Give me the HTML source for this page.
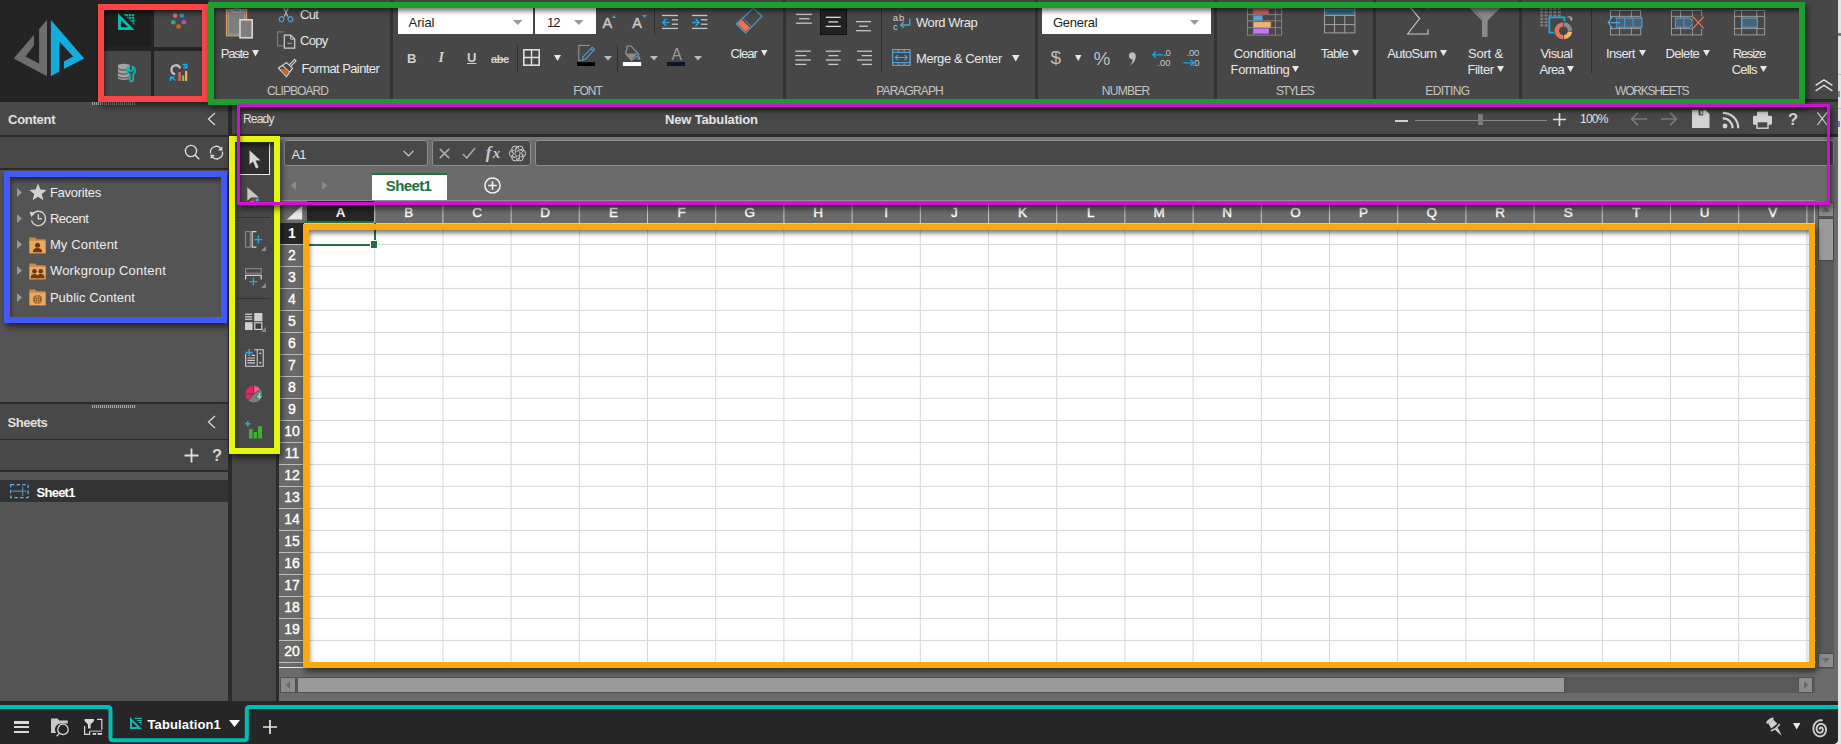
<!DOCTYPE html>
<html lang="en"><head><meta charset="utf-8"><title>New Tabulation</title>
<style>
html,body{margin:0;padding:0;}
body{width:1841px;height:744px;overflow:hidden;background:#e4e4e4;font-family:"Liberation Sans",sans-serif;}
#app{position:absolute;left:0;top:0;width:1838px;height:744px;background:#2b2b2b;overflow:hidden;border-bottom-right-radius:5px;}
.a{position:absolute;box-sizing:border-box;}
.t{white-space:nowrap;}
svg{overflow:visible;}
</style></head><body>
<div id="app">
<div class="a" style="left:0px;top:0px;width:209px;height:102px;background:#242424;"></div>
<div class="a" style="left:209px;top:0px;width:1629px;height:99px;background:#474747;"></div>
<div class="a" style="left:390px;top:0px;width:3px;height:99px;background:#333;"></div>
<div class="a" style="left:783px;top:0px;width:3px;height:99px;background:#333;"></div>
<div class="a" style="left:1034.5px;top:0px;width:3px;height:99px;background:#333;"></div>
<div class="a" style="left:1214px;top:0px;width:3px;height:99px;background:#333;"></div>
<div class="a" style="left:1373px;top:0px;width:3px;height:99px;background:#333;"></div>
<div class="a" style="left:1519px;top:0px;width:3px;height:99px;background:#333;"></div>
<div class="a" style="left:0px;top:102px;width:228px;height:33px;background:#484848;"></div>
<div class="a" style="left:0px;top:136.5px;width:228px;height:31.7px;background:#484848;"></div>
<div class="a" style="left:0px;top:169.6px;width:228px;height:232px;background:#545454;"></div>
<div class="a" style="left:0px;top:404.4px;width:228px;height:34.4px;background:#484848;"></div>
<div class="a" style="left:0px;top:440.4px;width:228px;height:29.8px;background:#484848;"></div>
<div class="a" style="left:0px;top:472px;width:228px;height:230px;background:#545454;"></div>
<div class="a" style="left:0px;top:480px;width:228px;height:22px;background:#333;"></div>
<div class="a" style="left:232px;top:102px;width:1606px;height:32px;background:#484848;"></div>
<div class="a" style="left:232px;top:137px;width:44px;height:565px;background:#484848;"></div>
<div class="a" style="left:279px;top:137px;width:1559px;height:564px;background:#6b6b6b;"></div>
<div class="a" style="left:0px;top:702px;width:1838px;height:42px;background:#262626;"></div>
<div class="a t" style="left:267.02px;top:83.14px;height:16px;line-height:16px;font-size:12px;color:#c4c4c4;letter-spacing:-0.924px;">CLIPBOARD</div>
<div class="a t" style="left:573.24px;top:83.14px;height:16px;line-height:16px;font-size:12px;color:#c4c4c4;letter-spacing:-1.045px;">FONT</div>
<div class="a t" style="left:876.28px;top:83.14px;height:16px;line-height:16px;font-size:12px;color:#c4c4c4;letter-spacing:-0.878px;">PARAGRAPH</div>
<div class="a t" style="left:1101.82px;top:83.14px;height:16px;line-height:16px;font-size:12px;color:#c4c4c4;letter-spacing:-0.728px;">NUMBER</div>
<div class="a t" style="left:1276.04px;top:83.14px;height:16px;line-height:16px;font-size:12px;color:#c4c4c4;letter-spacing:-1.458px;">STYLES</div>
<div class="a t" style="left:1425.29px;top:83.14px;height:16px;line-height:16px;font-size:12px;color:#c4c4c4;letter-spacing:-0.641px;">EDITING</div>
<div class="a t" style="left:1615.00px;top:83.14px;height:16px;line-height:16px;font-size:12px;color:#c4c4c4;letter-spacing:-1.194px;">WORKSHEETS</div>
<div class="a t" style="left:220.70px;top:45.15px;height:17px;line-height:17px;font-size:13px;color:#e8e8e8;letter-spacing:-1.165px;">Paste</div>
<div class="a t" style="left:300.00px;top:5.65px;height:17px;line-height:17px;font-size:13px;color:#e8e8e8;letter-spacing:-0.692px;">Cut</div>
<div class="a t" style="left:300.00px;top:32.15px;height:17px;line-height:17px;font-size:13px;color:#e8e8e8;letter-spacing:-0.671px;">Copy</div>
<div class="a t" style="left:301.50px;top:60.15px;height:17px;line-height:17px;font-size:13px;color:#e8e8e8;letter-spacing:-0.590px;">Format Painter</div>
<svg class="a" style="left:251.8px;top:49.5px;" width="7" height="6.5" viewBox="0 0 7 6.5"><polygon points="0,0 7,0 3.5,6.5" fill="#e8e8e8"/></svg>
<div class="a" style="left:397.5px;top:8.3px;width:135.5px;height:26px;background:#fff;"></div>
<div class="a" style="left:535px;top:8.3px;width:60.5px;height:26px;background:#fff;"></div>
<div class="a t" style="left:408.50px;top:13.65px;height:17px;line-height:17px;font-size:13px;color:#222;">Arial</div>
<div class="a t" style="left:547.00px;top:13.65px;height:17px;line-height:17px;font-size:13px;color:#222;letter-spacing:-0.972px;">12</div>
<svg class="a" style="left:512.5px;top:20px;" width="9.5" height="5" viewBox="0 0 9.5 5"><polygon points="0,0 9.5,0 4.75,5" fill="#999"/></svg>
<svg class="a" style="left:573.5px;top:20px;" width="9.5" height="5" viewBox="0 0 9.5 5"><polygon points="0,0 9.5,0 4.75,5" fill="#999"/></svg>
<div class="a t" style="left:602.60px;top:13.57px;height:19px;line-height:19px;font-size:14.5px;color:#c8c8c8;-webkit-text-stroke:0.4px #c8c8c8;">A</div>
<div class="a t" style="left:632.30px;top:13.57px;height:19px;line-height:19px;font-size:14.5px;color:#c8c8c8;-webkit-text-stroke:0.4px #c8c8c8;">A</div>
<svg class="a" style="left:612px;top:14.5px;" width="4" height="3" viewBox="0 0 4 3"><polygon points="0,3 4,3 2,0" fill="#35a8e0"/></svg>
<svg class="a" style="left:642px;top:14.5px;" width="5" height="3" viewBox="0 0 5 3"><polygon points="0,0 5,0 2.5,3" fill="#35a8e0"/></svg>
<div class="a" style="left:654px;top:8.5px;width:1px;height:26px;background:#2e2e2e;"></div>
<div class="a t" style="left:730.50px;top:45.15px;height:17px;line-height:17px;font-size:13px;color:#e8e8e8;letter-spacing:-0.903px;">Clear</div>
<svg class="a" style="left:761px;top:50px;" width="6.5" height="6" viewBox="0 0 6.5 6"><polygon points="0,0 6.5,0 3.25,6" fill="#e8e8e8"/></svg>
<div class="a t" style="left:407.00px;top:49.65px;height:17px;line-height:17px;font-size:13px;color:#d0d0d0;font-weight:700;">B</div>
<div class="a t" style="left:438.50px;top:49.16px;height:18px;line-height:18px;font-size:14px;color:#d0d0d0;font-weight:700;font-family:'Liberation Serif',serif;font-style:italic;">I</div>
<div class="a t" style="left:467.00px;top:49.15px;height:17px;line-height:17px;font-size:13px;color:#d0d0d0;font-weight:700;text-decoration:underline;">U</div>
<div class="a t" style="left:491.00px;top:52.13px;height:14px;line-height:14px;font-size:11px;color:#d0d0d0;font-weight:700;letter-spacing:-0.381px;text-decoration:line-through;">abc</div>
<div class="a" style="left:516.5px;top:44.5px;width:1px;height:27px;background:#2e2e2e;"></div>
<div class="a" style="left:617px;top:44.5px;width:1px;height:27px;background:#2e2e2e;"></div>
<svg class="a" style="left:553.5px;top:55px;" width="7" height="6" viewBox="0 0 7 6"><polygon points="0,0 7,0 3.5,6" fill="#e8e8e8"/></svg>
<svg class="a" style="left:604px;top:55.5px;" width="8" height="4.5" viewBox="0 0 8 4.5"><polygon points="0,0 8,0 4.0,4.5" fill="#bbb"/></svg>
<svg class="a" style="left:650px;top:55.5px;" width="8" height="4.5" viewBox="0 0 8 4.5"><polygon points="0,0 8,0 4.0,4.5" fill="#bbb"/></svg>
<svg class="a" style="left:694px;top:55.5px;" width="8" height="4.5" viewBox="0 0 8 4.5"><polygon points="0,0 8,0 4.0,4.5" fill="#bbb"/></svg>
<div class="a" style="left:820px;top:8.5px;width:27px;height:26.5px;background:#222;border:1px solid #111;"></div>
<div class="a" style="left:881px;top:8.5px;width:1px;height:64px;background:#2e2e2e;"></div>
<div class="a t" style="left:916.00px;top:14.15px;height:17px;line-height:17px;font-size:13px;color:#e8e8e8;letter-spacing:-0.442px;">Word Wrap</div>
<div class="a t" style="left:916.00px;top:50.15px;height:17px;line-height:17px;font-size:13px;color:#e8e8e8;letter-spacing:-0.426px;">Merge &amp; Center</div>
<svg class="a" style="left:1012px;top:55px;" width="7.5" height="6.5" viewBox="0 0 7.5 6.5"><polygon points="0,0 7.5,0 3.75,6.5" fill="#e8e8e8"/></svg>
<div class="a" style="left:1041.5px;top:8.3px;width:169px;height:26px;background:#fff;"></div>
<div class="a t" style="left:1053.00px;top:13.65px;height:17px;line-height:17px;font-size:13px;color:#222;letter-spacing:-0.269px;">General</div>
<svg class="a" style="left:1190px;top:20px;" width="9" height="5" viewBox="0 0 9 5"><polygon points="0,0 9,0 4.5,5" fill="#999"/></svg>
<div class="a t" style="left:1050.60px;top:45.22px;height:25px;line-height:25px;font-size:19px;color:#bcbcbc;">$</div>
<svg class="a" style="left:1074.5px;top:55px;" width="6.5" height="6" viewBox="0 0 6.5 6"><polygon points="0,0 6.5,0 3.25,6" fill="#e8e8e8"/></svg>
<div class="a t" style="left:1093.60px;top:46.02px;height:25px;line-height:25px;font-size:19px;color:#bcbcbc;">%</div>
<svg class="a" style="left:1127.5px;top:51.5px;" width="9" height="14" viewBox="0 0 9 14"><path d="M4.2,0.2 a3.6,3.6 0 0 1 3.6,3.8 c0,4.2 -2.6,7.8 -6.2,9.6 c2,-2 3,-4 3.2,-6.2 a3.6,3.6 0 0 1 -0.6,-7.2 z" fill="#bcbcbc"/></svg>
<div class="a t" style="left:1233.73px;top:45.15px;height:17px;line-height:17px;font-size:13px;color:#e8e8e8;letter-spacing:-0.290px;">Conditional</div>
<div class="a t" style="left:1230.62px;top:61.15px;height:17px;line-height:17px;font-size:13px;color:#e8e8e8;letter-spacing:-0.329px;">Formatting</div>
<svg class="a" style="left:1292px;top:66px;" width="7" height="6" viewBox="0 0 7 6"><polygon points="0,0 7,0 3.5,6" fill="#e8e8e8"/></svg>
<div class="a t" style="left:1320.80px;top:45.15px;height:17px;line-height:17px;font-size:13px;color:#e8e8e8;letter-spacing:-0.795px;">Table</div>
<svg class="a" style="left:1351.5px;top:50px;" width="7" height="6" viewBox="0 0 7 6"><polygon points="0,0 7,0 3.5,6" fill="#e8e8e8"/></svg>
<div class="a t" style="left:1387.30px;top:45.15px;height:17px;line-height:17px;font-size:13px;color:#e8e8e8;letter-spacing:-0.611px;">AutoSum</div>
<svg class="a" style="left:1440px;top:50px;" width="7" height="6" viewBox="0 0 7 6"><polygon points="0,0 7,0 3.5,6" fill="#e8e8e8"/></svg>
<div class="a t" style="left:1468.00px;top:45.15px;height:17px;line-height:17px;font-size:13px;color:#e8e8e8;letter-spacing:-0.204px;">Sort &amp;</div>
<div class="a t" style="left:1467.40px;top:61.15px;height:17px;line-height:17px;font-size:13px;color:#e8e8e8;letter-spacing:-0.434px;">Filter</div>
<svg class="a" style="left:1496.7px;top:66px;" width="7" height="6" viewBox="0 0 7 6"><polygon points="0,0 7,0 3.5,6" fill="#e8e8e8"/></svg>
<div class="a t" style="left:1540.50px;top:45.15px;height:17px;line-height:17px;font-size:13px;color:#e8e8e8;letter-spacing:-0.577px;">Visual</div>
<div class="a t" style="left:1539.50px;top:61.15px;height:17px;line-height:17px;font-size:13px;color:#e8e8e8;letter-spacing:-0.702px;">Area</div>
<svg class="a" style="left:1567px;top:66px;" width="7" height="6" viewBox="0 0 7 6"><polygon points="0,0 7,0 3.5,6" fill="#e8e8e8"/></svg>
<div class="a" style="left:1591px;top:8.5px;width:1px;height:64.5px;background:#2e2e2e;"></div>
<div class="a t" style="left:1606.00px;top:45.15px;height:17px;line-height:17px;font-size:13px;color:#e8e8e8;letter-spacing:-0.638px;">Insert</div>
<svg class="a" style="left:1639px;top:50px;" width="7" height="6" viewBox="0 0 7 6"><polygon points="0,0 7,0 3.5,6" fill="#e8e8e8"/></svg>
<div class="a t" style="left:1665.50px;top:45.15px;height:17px;line-height:17px;font-size:13px;color:#e8e8e8;letter-spacing:-0.650px;">Delete</div>
<svg class="a" style="left:1703px;top:50px;" width="7" height="6" viewBox="0 0 7 6"><polygon points="0,0 7,0 3.5,6" fill="#e8e8e8"/></svg>
<div class="a t" style="left:1732.70px;top:45.15px;height:17px;line-height:17px;font-size:13px;color:#e8e8e8;letter-spacing:-1.225px;">Resize</div>
<div class="a t" style="left:1731.70px;top:61.15px;height:17px;line-height:17px;font-size:13px;color:#e8e8e8;letter-spacing:-0.799px;">Cells</div>
<svg class="a" style="left:1760px;top:66px;" width="7" height="6" viewBox="0 0 7 6"><polygon points="0,0 7,0 3.5,6" fill="#e8e8e8"/></svg>
<svg class="a" style="left:1814.6px;top:78.6px;" width="18" height="13" viewBox="0 0 18 13"><polyline points="0.6,6.4 9,0.9 17.4,6.4" fill="none" stroke="#ddd" stroke-width="1.5"/><polyline points="0.6,11.9 9,6.4 17.4,11.9" fill="none" stroke="#ddd" stroke-width="1.5"/></svg>
<svg class="a" style="left:0px;top:0px;" width="100" height="100" viewBox="0 0 100 100"><polygon points="47,19.9 39.1,29.1 39.1,63.4 25.5,56.5 33.9,45.5 33.9,34.8 13.7,58.5 47,76.2" fill="#6d6e70"/><polygon points="50.9,19.9 84.2,58.5 63.9,69.1 63.9,61.5 73.1,56.5 59.4,41.4 59.4,71.6 50.9,76.2" fill="#14acdc"/></svg>
<div class="a" style="left:104px;top:10px;width:47.2px;height:36.8px;background:#1f1f1f;"></div>
<div class="a" style="left:154px;top:10px;width:48px;height:36.8px;background:#474747;"></div>
<div class="a" style="left:104px;top:50.9px;width:47.2px;height:45.5px;background:#474747;"></div>
<div class="a" style="left:154px;top:50.9px;width:48px;height:45.5px;background:#474747;"></div>
<svg class="a" style="left:117.9px;top:13px;" width="16.5" height="17" viewBox="0 0 16.5 17"><path d="M0,0 L0,17 L16.5,17 Z M2.9,7 L2.9,14.2 L10.1,14.2 Z" fill="#10b9b0" fill-rule="evenodd"/><path d="M5.6,0.9 H16.3 V2.9 H7.6 Z M8.4,3.8 H16.3 V5.8 H10.4 Z M11.2,6.7 H16.3 V8.7 H13.2 Z M14,9.6 H16.3 V11.9 H16.2 Z" fill="#10b9b0"/><path d="M10.4,0.5 V6 M13.4,0.5 V9" stroke="#1f1f1f" stroke-width="0.6"/></svg>
<svg class="a" style="left:170px;top:10px;" width="20" height="20" viewBox="0 0 20 20"><circle cx="5.2" cy="5.5" r="2.3" fill="#d6796c"/><circle cx="11.9" cy="5.5" r="2.3" fill="#4a8ec2"/><circle cx="3.3" cy="12.2" r="2.3" fill="#4b9f90"/><circle cx="13.9" cy="12.2" r="2.3" fill="#9a59c6"/><circle cx="8.6" cy="16.5" r="2.3" fill="#d0661e"/></svg>
<svg class="a" style="left:117px;top:63px;" width="20" height="19" viewBox="0 0 20 19"><g fill="#a2a2a2"><path d="M0.9,2.6 a6,1.9 0 0 1 12,0 v2 a6,1.9 0 0 1 -12,0 z"/><path d="M0.9,5.6 a6,1.9 0 0 0 12,0 v3 a6,1.9 0 0 1 -12,0 z"/><path d="M0.9,9.6 a6,1.9 0 0 0 12,0 v3 a6,1.9 0 0 1 -12,0 z"/><path d="M0.9,13.6 a6,1.9 0 0 0 12,0 v1.4 a6,1.9 0 0 1 -12,0 z"/></g><path d="M11.4,3.6 v3.4 l1.2,1 h1.8 l1.2,-1 v-3.4 a4.6,4.6 0 0 1 0.6,7.8 v5.2 a1.7,1.7 0 0 1 -3.4,0 v-5.2 a4.6,4.6 0 0 1 -1.4,-7.8 z" fill="#474747" stroke="#12b4b4" stroke-width="1.7" stroke-linejoin="round"/></svg>
<svg class="a" style="left:169px;top:63px;" width="20" height="19" viewBox="0 0 20 19"><path d="M6.2,11.2 A4.5,4.5 0 1 1 11.2,5.3" fill="none" stroke="#bdbdbd" stroke-width="2.3"/><rect x="9.3" y="9.1" width="2.6" height="8.9" fill="#e0604c"/><rect x="13.1" y="12.4" width="2.1" height="5.6" fill="#7cc650"/><rect x="16.1" y="7.9" width="2.1" height="10.1" fill="#f0b45e"/><path d="M13.4,1.4 h4.2 M14.4,1.8 l3.2,2.8 M18,1 v3.9 h-4" fill="none" stroke="#14acf0" stroke-width="1.2"/><path d="M1.4,18 v-3.9 h4.4 M1.6,14.3 l5,3.2" fill="none" stroke="#14acf0" stroke-width="1.3"/></svg>
<div class="a" style="left:92px;top:102px;width:44px;height:3px;background:repeating-linear-gradient(90deg,#bbb 0 1px,#555 1px 2px);opacity:.8;"></div>
<div class="a" style="left:92px;top:405px;width:44px;height:3px;background:repeating-linear-gradient(90deg,#bbb 0 1px,#555 1px 2px);opacity:.8;"></div>
<svg class="a" style="left:225px;top:8px;" width="30" height="32" viewBox="0 0 30 32"><rect x="1.5" y="1.8" width="20" height="26" fill="#7a7a7a" stroke="#d8a05a" stroke-width="1.2"/><rect x="3.6" y="4" width="15.8" height="22" fill="#7e7e7e" stroke="#9a9a9a" stroke-width="1"/><path d="M7,3.8 v-2.4 h3.2 l1.3,-1.6 l1.3,1.6 h3.2 v2.4 z" fill="#7a7a7a" stroke="#b0b0b0" stroke-width="0.9"/><rect x="15" y="11.8" width="12.2" height="18" fill="#7e7e7e" stroke="#d8d8d8" stroke-width="1.6"/></svg>
<svg class="a" style="left:278px;top:4.8px;" width="16" height="18" viewBox="0 0 16 18"><path d="M4.6,0.5 L9.8,11.5 M11.4,0.5 L6.2,11.5" stroke="#c8c8c8" stroke-width="1.1" fill="none"/><ellipse cx="3.6" cy="14.2" rx="2.3" ry="2.6" fill="none" stroke="#4fa3d6" stroke-width="1.2" transform="rotate(25 3.6 14.2)"/><ellipse cx="12.4" cy="14.2" rx="2.3" ry="2.6" fill="none" stroke="#4fa3d6" stroke-width="1.2" transform="rotate(-25 12.4 14.2)"/></svg>
<svg class="a" style="left:276px;top:30px;" width="20" height="20" viewBox="0 0 20 20"><path d="M7.5,1.9 h-6 v14 h6" fill="none" stroke="#7c7c7c" stroke-width="1.1"/><path d="M8.3,5.1 h6.4 l4,4 v9 h-10.4 z" fill="#474747" stroke="#cfcfcf" stroke-width="1.2"/><path d="M14.7,5.1 v4 h4" fill="none" stroke="#cfcfcf" stroke-width="1"/><rect x="11.3" y="12.8" width="4.6" height="1.3" fill="#8a8a8a"/></svg>
<svg class="a" style="left:277px;top:58px;" width="20" height="20" viewBox="0 0 20 20"><path d="M12.6,6.6 L17.6,1.4 L19,2.8 L14,8.2" fill="none" stroke="#d0d0d0" stroke-width="1.2"/><path d="M9.6,4.6 L15.6,10.4 L12.6,14.2 L5.2,7.4 Z" fill="#474747" stroke="#d0d0d0" stroke-width="1.2" stroke-linejoin="round"/><path d="M5.2,7.4 L1.4,10 L9.4,18.6 L12.6,14.2" fill="none" stroke="#d0d0d0" stroke-width="1.2" stroke-linejoin="round"/><path d="M3.4,10.6 L12,12.6 L9.4,17.4 L7.6,15 L6.2,15.2 Z" fill="#d2691e"/></svg>
<div class="a t" style="left:8.00px;top:110.95px;height:17px;line-height:17px;font-size:13px;color:#e0e0e0;font-weight:700;letter-spacing:-0.245px;">Content</div>
<svg class="a" style="left:207px;top:112px;" width="10" height="14" viewBox="0 0 10 14"><polyline points="8,1 1.5,7 8,13" fill="none" stroke="#d8d8d8" stroke-width="1.3"/></svg>
<svg class="a" style="left:184px;top:144px;" width="17" height="17" viewBox="0 0 17 17"><circle cx="7" cy="7" r="5.6" fill="none" stroke="#d8d8d8" stroke-width="1.4"/><path d="M11,11 L15.2,15.2" stroke="#d8d8d8" stroke-width="1.6"/></svg>
<svg class="a" style="left:209px;top:144.5px;" width="15" height="15" viewBox="0 0 15 15"><path d="M1.6,8.6 A5.9,5.9 0 0 1 11.8,3.4" fill="none" stroke="#d8d8d8" stroke-width="1.3"/><polygon points="13.4,1.2 13.4,5.8 9,5.2" fill="#d8d8d8"/><path d="M13.4,6.6 A5.9,5.9 0 0 1 3.2,11.8" fill="none" stroke="#d8d8d8" stroke-width="1.3"/><polygon points="1.6,14 1.6,9.4 6,10" fill="#d8d8d8"/></svg>
<svg class="a" style="left:17px;top:188.1px;" width="5" height="9" viewBox="0 0 5 9"><polygon points="0,0 5,4.5 0,9" fill="#9a9a9a"/></svg>
<div class="a t" style="left:49.90px;top:184.25px;height:17px;line-height:17px;font-size:13px;color:#ececec;letter-spacing:-0.265px;">Favorites</div>
<svg class="a" style="left:17px;top:213.9px;" width="5" height="9" viewBox="0 0 5 9"><polygon points="0,0 5,4.5 0,9" fill="#9a9a9a"/></svg>
<div class="a t" style="left:49.90px;top:210.05px;height:17px;line-height:17px;font-size:13px;color:#ececec;letter-spacing:-0.452px;">Recent</div>
<svg class="a" style="left:17px;top:240.3px;" width="5" height="9" viewBox="0 0 5 9"><polygon points="0,0 5,4.5 0,9" fill="#9a9a9a"/></svg>
<div class="a t" style="left:49.90px;top:236.45px;height:17px;line-height:17px;font-size:13px;color:#ececec;letter-spacing:0.151px;">My Content</div>
<svg class="a" style="left:17px;top:266.1px;" width="5" height="9" viewBox="0 0 5 9"><polygon points="0,0 5,4.5 0,9" fill="#9a9a9a"/></svg>
<div class="a t" style="left:49.90px;top:262.25px;height:17px;line-height:17px;font-size:13px;color:#ececec;letter-spacing:0.213px;">Workgroup Content</div>
<svg class="a" style="left:17px;top:292.8px;" width="5" height="9" viewBox="0 0 5 9"><polygon points="0,0 5,4.5 0,9" fill="#9a9a9a"/></svg>
<div class="a t" style="left:49.90px;top:288.95px;height:17px;line-height:17px;font-size:13px;color:#ececec;letter-spacing:0.041px;">Public Content</div>
<svg class="a" style="left:28.5px;top:182.5px;" width="18" height="18" viewBox="0 0 18 18"><polygon points="9,0.6 11.4,6.6 17.6,7 12.8,11 14.4,17.2 9,13.8 3.6,17.2 5.2,11 0.4,7 6.6,6.6" fill="#d2d2d2"/></svg>
<svg class="a" style="left:28.5px;top:209px;" width="18" height="18" viewBox="0 0 18 18"><path d="M3.2,5.6 A7.2,7.2 0 1 1 2.4,11.4" fill="none" stroke="#d2d2d2" stroke-width="1.4"/><polygon points="0.6,2.6 6,4 2.2,8" fill="#d2d2d2"/><path d="M9.3,5.2 v4.6 h3.6" fill="none" stroke="#d2d2d2" stroke-width="1.4"/></svg>
<svg class="a" style="left:29px;top:236.5px;" width="17" height="17" viewBox="0 0 17 17"><path d="M0.3,0.4 h5.8 l1.6,1.8 h8.8 v2.4 h-16.2 z" fill="#c98c44"/><rect x="0.3" y="3.8" width="16.4" height="12.6" fill="#eaa95e"/><circle cx="8.5" cy="8.2" r="2.5" fill="#6b3a12"/><path d="M3.8,15.2 q0,-4.2 4.7,-4.2 q4.7,0 4.7,4.2 z" fill="#6b3a12"/></svg>
<svg class="a" style="left:29px;top:262.5px;" width="17" height="17" viewBox="0 0 17 17"><path d="M0.3,0.4 h5.8 l1.6,1.8 h8.8 v2.4 h-16.2 z" fill="#c98c44"/><rect x="0.3" y="3.8" width="16.4" height="12.6" fill="#eaa95e"/><circle cx="5.4" cy="8.2" r="2.3" fill="#6b3a12"/><path d="M1.6,15.2 q0,-4.2 3.8,-4.2 q3.8,0 3.8,4.2 z" fill="#6b3a12"/><circle cx="11.8" cy="8.2" r="2.3" fill="#6b3a12"/><path d="M8,15.2 q0,-4.2 3.8,-4.2 q3.8,0 3.8,4.2 z" fill="#6b3a12"/></svg>
<svg class="a" style="left:29px;top:289px;" width="17" height="17" viewBox="0 0 17 17"><path d="M0.3,0.4 h5.8 l1.6,1.8 h8.8 v2.4 h-16.2 z" fill="#c98c44"/><rect x="0.3" y="3.8" width="16.4" height="12.6" fill="#eaa95e"/><circle cx="8.5" cy="10.4" r="4.4" fill="#7a4516"/><path d="M4.1,10.4 h8.8 M8.5,6 v8.8 M5,8.2 h7 M5,12.6 h7" stroke="#eaa95e" stroke-width="0.6" fill="none"/><ellipse cx="8.5" cy="10.4" rx="2" ry="4.4" fill="none" stroke="#eaa95e" stroke-width="0.6"/></svg>
<div class="a t" style="left:7.50px;top:413.65px;height:17px;line-height:17px;font-size:13px;color:#e0e0e0;font-weight:700;letter-spacing:-0.478px;">Sheets</div>
<svg class="a" style="left:207px;top:414.8px;" width="10" height="14" viewBox="0 0 10 14"><polyline points="8,1 1.5,7 8,13" fill="none" stroke="#d8d8d8" stroke-width="1.3"/></svg>
<svg class="a" style="left:184px;top:448px;" width="15" height="15" viewBox="0 0 15 15"><path d="M7.5,0.5 v14 M0.5,7.5 h14" stroke="#e0e0e0" stroke-width="1.8"/></svg>
<div class="a t" style="left:212.00px;top:445.39px;height:21px;line-height:21px;font-size:16.5px;color:#d4d4d4;font-weight:700;">?</div>
<div class="a t" style="left:36.60px;top:484.05px;height:17px;line-height:17px;font-size:13px;color:#fff;font-weight:700;letter-spacing:-0.769px;">Sheet1</div>
<svg class="a" style="left:9.6px;top:484px;" width="19" height="14.4" viewBox="0 0 19 14.4"><rect x="0.7" y="0.7" width="17.4" height="13" fill="none" stroke="#5ab0dc" stroke-width="1.3" stroke-dasharray="3.6 2.2"/><path d="M2.4,7.2 h14" stroke="#4a7f9e" stroke-width="1.5"/><path d="M12.6,2.4 v9.6" stroke="#4a7f9e" stroke-width="1.4"/></svg>
<div class="a t" style="left:243.00px;top:111.44px;height:16px;line-height:16px;font-size:12px;color:#e0e0e0;letter-spacing:-0.819px;">Ready</div>
<div class="a t" style="left:664.96px;top:110.95px;height:17px;line-height:17px;font-size:13px;color:#e4e4e4;font-weight:700;letter-spacing:-0.155px;">New Tabulation</div>
<div class="a" style="left:1395px;top:119.5px;width:13px;height:2px;background:#d0d0d0;"></div>
<div class="a" style="left:1415px;top:120px;width:132px;height:1px;background:#8a8a8a;"></div>
<div class="a" style="left:1477.7px;top:114px;width:5.4px;height:11px;background:#7c7c7c;"></div>
<svg class="a" style="left:1553px;top:112.5px;" width="13" height="13" viewBox="0 0 13 13"><path d="M6.5,0 v13 M0,6.5 h13" stroke="#e0e0e0" stroke-width="1.6"/></svg>
<div class="a t" style="left:1580.00px;top:110.64px;height:16px;line-height:16px;font-size:12px;color:#e0e0e0;letter-spacing:-0.769px;">100%</div>
<svg class="a" style="left:1630px;top:110.6px;" width="18" height="16" viewBox="0 0 18 16"><path d="M17,8 H2 M8,1.6 L1.6,8 L8,14.4" fill="none" stroke="#7a7a7a" stroke-width="1.7"/></svg>
<svg class="a" style="left:1660px;top:110.6px;" width="18" height="16" viewBox="0 0 18 16"><path d="M1,8 H16 M10,1.6 L16.4,8 L10,14.4" fill="none" stroke="#7a7a7a" stroke-width="1.7"/></svg>
<svg class="a" style="left:1691.5px;top:110px;" width="18" height="18" viewBox="0 0 18 18"><path d="M0,0 h13.6 l3.9,3.9 v14.1 h-17.5 z" fill="#d2d2d2"/><rect x="6.6" y="0" width="4.6" height="5.4" fill="#484848"/><rect x="8.6" y="0.8" width="1.8" height="3.4" fill="#d2d2d2"/></svg>
<svg class="a" style="left:1722px;top:110.5px;" width="18" height="18" viewBox="0 0 18 18"><circle cx="3" cy="15" r="2.4" fill="#d2d2d2"/><path d="M0.8,7.4 A9.6,9.6 0 0 1 10.6,17.2" fill="none" stroke="#d2d2d2" stroke-width="2.2"/><path d="M0.8,1.8 A15.2,15.2 0 0 1 16.2,17.2" fill="none" stroke="#d2d2d2" stroke-width="2.2"/></svg>
<svg class="a" style="left:1752.5px;top:110.5px;" width="19" height="18" viewBox="0 0 19 18"><rect x="4" y="0.6" width="11" height="5" fill="#d2d2d2"/><rect x="0" y="4.8" width="19" height="9" rx="1.4" fill="#d2d2d2"/><rect x="4" y="10.6" width="11" height="6.6" fill="#484848" stroke="#d2d2d2" stroke-width="1.4"/></svg>
<div class="a t" style="left:1788.00px;top:108.59px;height:21px;line-height:21px;font-size:16.5px;color:#d4d4d4;font-weight:700;">?</div>
<svg class="a" style="left:1817px;top:112.4px;" width="10.4" height="13.4" viewBox="0 0 10.4 13.4"><path d="M0.4,0.4 L10,13 M10,0.4 L0.4,13" stroke="#d0d0d0" stroke-width="1.2"/></svg>
<div class="a" style="left:239.5px;top:142.5px;width:30.5px;height:32px;background:#2e2e2e;border-right:1px solid #e8e8e8;border-bottom:1px solid #e8e8e8;"></div>
<svg class="a" style="left:248.5px;top:150px;" width="13" height="19" viewBox="0 0 13 19"><polygon points="0.5,0.3 0.5,14.6 4,11.6 7,18.4 9.6,17.2 6.6,10.6 11.6,10.6" fill="#d6d6d6"/></svg>
<svg class="a" style="left:246.5px;top:186.5px;" width="14" height="16" viewBox="0 0 14 16"><polygon points="0.3,0.3 0.3,13.8 4.2,10.4 12,10.4" fill="#c6c6c6"/><rect x="5" y="12.4" width="2.4" height="2.4" fill="#e04848"/><rect x="3.4" y="14" width="2.2" height="2" fill="#35c28a"/><rect x="8.6" y="11.6" width="3" height="3" fill="#35a8e0"/></svg>
<div class="a" style="left:237px;top:217px;width:33px;height:1px;background:#333;"></div>
<div class="a" style="left:237px;top:298px;width:33px;height:1px;background:#333;"></div>
<svg class="a" style="left:245px;top:231px;" width="20" height="18" viewBox="0 0 20 18"><rect x="0.6" y="0.6" width="4.6" height="15.6" fill="none" stroke="#8a8a8a" stroke-width="1.1"/><path d="M11.4,0.6 h-4.2 v15.6 h4.2" fill="none" stroke="#d2d2d2" stroke-width="1.2"/><path d="M13.4,4.6 v8 M9.4,8.6 h8" stroke="#16b0f0" stroke-width="1.3"/></svg>
<svg class="a" style="left:261px;top:246px;" width="5" height="5" viewBox="0 0 5 5"><polygon points="5,0 5,5 0,5" fill="#8c8c8c"/></svg>
<svg class="a" style="left:245px;top:267.5px;" width="20" height="19" viewBox="0 0 20 19"><rect x="0.6" y="0.6" width="15.6" height="4.6" fill="none" stroke="#8a8a8a" stroke-width="1.1"/><path d="M0.6,11.6 v-4.2 h15.6 v4.2" fill="none" stroke="#d2d2d2" stroke-width="1.2"/><path d="M8.4,9.6 v8 M4.4,13.6 h8" stroke="#16b0f0" stroke-width="1.3"/></svg>
<svg class="a" style="left:261px;top:283px;" width="5" height="5" viewBox="0 0 5 5"><polygon points="5,0 5,5 0,5" fill="#8c8c8c"/></svg>
<svg class="a" style="left:245px;top:313px;" width="18" height="18" viewBox="0 0 18 18"><path d="M0,1.2 h7.2 M0,3.7 h7.2 M0,6.2 h7.2" stroke="#bdbdbd" stroke-width="1.4"/><rect x="9.2" y="0" width="8.2" height="8.2" fill="#cfcfcf"/><rect x="0" y="9.2" width="7.6" height="7.8" fill="#cfcfcf"/><rect x="9.8" y="9.8" width="7" height="6.6" fill="#3a3a3a" stroke="#cfcfcf" stroke-width="1.2"/></svg>
<svg class="a" style="left:261px;top:327px;" width="5" height="5" viewBox="0 0 5 5"><polygon points="5,0 5,5 0,5" fill="#8c8c8c"/></svg>
<svg class="a" style="left:244.5px;top:349px;" width="19" height="18" viewBox="0 0 19 18"><path d="M0.6,5 v12.2 h17.6 v-16.4 h-9" fill="none" stroke="#cfcfcf" stroke-width="1.1"/><path d="M12.2,0.8 v16.4" stroke="#cfcfcf" stroke-width="1"/><path d="M2.4,9 h7.6 M2.4,11.4 h7.6 M2.4,13.8 h7.6 M6.6,6.4 h3.4" stroke="#cfcfcf" stroke-width="1.2"/><polygon points="13.8,5 16.6,5 15.2,3" fill="#cfcfcf"/><polygon points="13.8,13 16.6,13 15.2,15" fill="#cfcfcf"/><path d="M4.2,0 v7.2 M0.6,3.6 h7.2" stroke="#2ea6de" stroke-width="1.6"/></svg>
<svg class="a" style="left:244.5px;top:385px;" width="19" height="19" viewBox="0 0 19 19"><circle cx="8.6" cy="9" r="8.4" fill="#7e7e7e"/><path d="M8.6,9 L15.6,4.4 A8.4,8.4 0 0 0 8.6,0.6 Z" fill="#ef5f97" stroke="#484848" stroke-width="0.8"/><path d="M8.6,9 V0.6 A8.4,8.4 0 0 0 0.2,9 Z" fill="#e02868" stroke="#484848" stroke-width="0.8"/><path d="M8.6,9 H0.2 A8.4,8.4 0 0 0 3.4,15.6 Z" fill="#e02868" stroke="#484848" stroke-width="0.8"/><polygon points="14.4,7.2 11,13 13.6,13 12.2,18 17.6,10.6 15,10.6 16.8,7.2" fill="#5ef0b8" stroke="#484848" stroke-width="0.5"/></svg>
<svg class="a" style="left:245px;top:421px;" width="18" height="18" viewBox="0 0 18 18"><rect x="4" y="8" width="3.6" height="9.6" fill="#3fb034"/><rect x="8.6" y="11" width="3.4" height="6.6" fill="#3fb034"/><rect x="13" y="5" width="4" height="12.6" fill="#3fb034"/><path d="M2.8,0 v5.6 M0,2.8 h5.6" stroke="#2ea6de" stroke-width="1.6"/></svg>
<div class="a" style="left:279px;top:137px;width:1559px;height:3px;background:#767676;"></div>
<div class="a" style="left:284px;top:140px;width:143.6px;height:26px;background:#484848;border:1px solid #8e8e8e;border-radius:3px;"></div>
<div class="a" style="left:432px;top:140px;width:98.6px;height:26px;background:#484848;border:1px solid #8e8e8e;border-radius:3px;"></div>
<div class="a" style="left:535px;top:140px;width:1299px;height:26px;background:#484848;border:1px solid #8e8e8e;border-radius:3px;"></div>
<div class="a t" style="left:291.50px;top:146.45px;height:17px;line-height:17px;font-size:13px;color:#e0e0e0;letter-spacing:-0.934px;">A1</div>
<svg class="a" style="left:403px;top:150px;" width="11" height="7" viewBox="0 0 11 7"><polyline points="0.6,0.8 5.5,5.8 10.4,0.8" fill="none" stroke="#d0d0d0" stroke-width="1.2"/></svg>
<svg class="a" style="left:439px;top:148px;" width="11" height="11" viewBox="0 0 11 11"><path d="M0.8,0.8 L10.2,10.2 M10.2,0.8 L0.8,10.2" stroke="#a8a8a8" stroke-width="1.7"/></svg>
<svg class="a" style="left:462px;top:147px;" width="14" height="12" viewBox="0 0 14 12"><polyline points="0.8,7 4.8,11 13,1" fill="none" stroke="#a8a8a8" stroke-width="1.6"/></svg>
<div class="a t" style="left:485.80px;top:141.80px;height:22px;line-height:22px;font-size:17px;color:#c8c8c8;font-weight:700;font-family:'Liberation Serif',serif;font-style:italic;">f</div>
<div class="a t" style="left:492.80px;top:142.57px;height:20px;line-height:20px;font-size:15px;color:#c8c8c8;font-weight:700;font-family:'Liberation Serif',serif;font-style:italic;">x</div>
<svg class="a" style="left:509.3px;top:145px;" width="17" height="17" viewBox="0 0 17 17"><circle cx="13.10" cy="8.50" r="3.5" fill="none" stroke="#cfcfcf" stroke-width="1"/><circle cx="10.80" cy="12.48" r="3.5" fill="none" stroke="#cfcfcf" stroke-width="1"/><circle cx="6.20" cy="12.48" r="3.5" fill="none" stroke="#cfcfcf" stroke-width="1"/><circle cx="3.90" cy="8.50" r="3.5" fill="none" stroke="#cfcfcf" stroke-width="1"/><circle cx="6.20" cy="4.52" r="3.5" fill="none" stroke="#cfcfcf" stroke-width="1"/><circle cx="10.80" cy="4.52" r="3.5" fill="none" stroke="#cfcfcf" stroke-width="1"/><circle cx="8.5" cy="8.5" r="4.3" fill="#484848"/><path d="M10.80,8.50 L10.16,14.68" stroke="#cfcfcf" stroke-width="0.9" fill="none"/><path d="M9.65,10.49 L3.97,13.03" stroke="#cfcfcf" stroke-width="0.9" fill="none"/><path d="M7.35,10.49 L2.32,6.84" stroke="#cfcfcf" stroke-width="0.9" fill="none"/><path d="M6.20,8.50 L6.84,2.32" stroke="#cfcfcf" stroke-width="0.9" fill="none"/><path d="M7.35,6.51 L13.03,3.97" stroke="#cfcfcf" stroke-width="0.9" fill="none"/><path d="M9.65,6.51 L14.68,10.16" stroke="#cfcfcf" stroke-width="0.9" fill="none"/></svg>
<svg class="a" style="left:290px;top:181px;" width="6" height="9" viewBox="0 0 6 9"><polygon points="6,0 6,9 0.5,4.5" fill="#8a8a8a"/></svg>
<svg class="a" style="left:322px;top:181px;" width="6" height="9" viewBox="0 0 6 9"><polygon points="0,0 0,9 5.5,4.5" fill="#8a8a8a"/></svg>
<div class="a" style="left:371.5px;top:173.2px;width:75px;height:27.8px;background:#fff;border-top:2.2px solid #217346;"></div>
<div class="a t" style="left:385.75px;top:175.97px;height:20px;line-height:20px;font-size:15px;color:#1e7145;font-weight:700;letter-spacing:-0.616px;">Sheet1</div>
<svg class="a" style="left:484px;top:177px;" width="17" height="17" viewBox="0 0 17 17"><circle cx="8.5" cy="8.5" r="7.6" fill="none" stroke="#f0f0f0" stroke-width="1.5"/><path d="M8.5,4.2 v8.6 M4.2,8.5 h8.6" stroke="#f0f0f0" stroke-width="1.6"/></svg>
<div class="a" style="left:304px;top:222.4px;width:1511px;height:445.6px;background:#fff;"></div>
<div class="a" style="left:280px;top:200px;width:1535px;height:1px;background:#909090;"></div>
<div class="a" style="left:280px;top:201px;width:1535px;height:22px;background:#6b6b6b;"></div>
<div class="a" style="left:280px;top:223px;width:1535px;height:1px;background:#d4d4d4;"></div>
<div class="a" style="left:307px;top:201px;width:67px;height:20px;background:#262626;"></div>
<div class="a" style="left:304px;top:220.6px;width:71.7px;height:2.6px;background:#217346;"></div>
<svg class="a" style="left:280px;top:201px;" width="26" height="21" viewBox="0 0 26 21"><polygon points="22.2,4.4 22.2,18.5 6.8,18.5" fill="#e8e8e8"/></svg>
<svg class="a" style="left:280px;top:201px;" width="1536" height="468" viewBox="0 0 1536 468"><rect x="94.20" y="1" width="1" height="22" fill="#c9c9c9"/><rect x="94.20" y="21.4" width="1" height="446" fill="#d6d6d6"/><rect x="162.40" y="1" width="1" height="22" fill="#c9c9c9"/><rect x="162.40" y="21.4" width="1" height="446" fill="#d6d6d6"/><rect x="230.60" y="1" width="1" height="22" fill="#c9c9c9"/><rect x="230.60" y="21.4" width="1" height="446" fill="#d6d6d6"/><rect x="298.80" y="1" width="1" height="22" fill="#c9c9c9"/><rect x="298.80" y="21.4" width="1" height="446" fill="#d6d6d6"/><rect x="367.00" y="1" width="1" height="22" fill="#c9c9c9"/><rect x="367.00" y="21.4" width="1" height="446" fill="#d6d6d6"/><rect x="435.20" y="1" width="1" height="22" fill="#c9c9c9"/><rect x="435.20" y="21.4" width="1" height="446" fill="#d6d6d6"/><rect x="503.40" y="1" width="1" height="22" fill="#c9c9c9"/><rect x="503.40" y="21.4" width="1" height="446" fill="#d6d6d6"/><rect x="571.60" y="1" width="1" height="22" fill="#c9c9c9"/><rect x="571.60" y="21.4" width="1" height="446" fill="#d6d6d6"/><rect x="639.80" y="1" width="1" height="22" fill="#c9c9c9"/><rect x="639.80" y="21.4" width="1" height="446" fill="#d6d6d6"/><rect x="708.00" y="1" width="1" height="22" fill="#c9c9c9"/><rect x="708.00" y="21.4" width="1" height="446" fill="#d6d6d6"/><rect x="776.20" y="1" width="1" height="22" fill="#c9c9c9"/><rect x="776.20" y="21.4" width="1" height="446" fill="#d6d6d6"/><rect x="844.40" y="1" width="1" height="22" fill="#c9c9c9"/><rect x="844.40" y="21.4" width="1" height="446" fill="#d6d6d6"/><rect x="912.60" y="1" width="1" height="22" fill="#c9c9c9"/><rect x="912.60" y="21.4" width="1" height="446" fill="#d6d6d6"/><rect x="980.80" y="1" width="1" height="22" fill="#c9c9c9"/><rect x="980.80" y="21.4" width="1" height="446" fill="#d6d6d6"/><rect x="1049.00" y="1" width="1" height="22" fill="#c9c9c9"/><rect x="1049.00" y="21.4" width="1" height="446" fill="#d6d6d6"/><rect x="1117.20" y="1" width="1" height="22" fill="#c9c9c9"/><rect x="1117.20" y="21.4" width="1" height="446" fill="#d6d6d6"/><rect x="1185.40" y="1" width="1" height="22" fill="#c9c9c9"/><rect x="1185.40" y="21.4" width="1" height="446" fill="#d6d6d6"/><rect x="1253.60" y="1" width="1" height="22" fill="#c9c9c9"/><rect x="1253.60" y="21.4" width="1" height="446" fill="#d6d6d6"/><rect x="1321.80" y="1" width="1" height="22" fill="#c9c9c9"/><rect x="1321.80" y="21.4" width="1" height="446" fill="#d6d6d6"/><rect x="1390.00" y="1" width="1" height="22" fill="#c9c9c9"/><rect x="1390.00" y="21.4" width="1" height="446" fill="#d6d6d6"/><rect x="1458.20" y="1" width="1" height="22" fill="#c9c9c9"/><rect x="1458.20" y="21.4" width="1" height="446" fill="#d6d6d6"/><rect x="1526.40" y="1" width="1" height="22" fill="#c9c9c9"/><rect x="1526.40" y="21.4" width="1" height="446" fill="#d6d6d6"/><rect x="1534" y="1" width="1" height="22" fill="#c9c9c9"/><rect x="26" y="42.90" width="1510" height="1" fill="#d6d6d6"/><rect x="26" y="64.90" width="1510" height="1" fill="#d6d6d6"/><rect x="26" y="86.90" width="1510" height="1" fill="#d6d6d6"/><rect x="26" y="108.90" width="1510" height="1" fill="#d6d6d6"/><rect x="26" y="130.90" width="1510" height="1" fill="#d6d6d6"/><rect x="26" y="152.90" width="1510" height="1" fill="#d6d6d6"/><rect x="26" y="174.90" width="1510" height="1" fill="#d6d6d6"/><rect x="26" y="196.90" width="1510" height="1" fill="#d6d6d6"/><rect x="26" y="218.90" width="1510" height="1" fill="#d6d6d6"/><rect x="26" y="240.90" width="1510" height="1" fill="#d6d6d6"/><rect x="26" y="262.90" width="1510" height="1" fill="#d6d6d6"/><rect x="26" y="284.90" width="1510" height="1" fill="#d6d6d6"/><rect x="26" y="306.90" width="1510" height="1" fill="#d6d6d6"/><rect x="26" y="328.90" width="1510" height="1" fill="#d6d6d6"/><rect x="26" y="350.90" width="1510" height="1" fill="#d6d6d6"/><rect x="26" y="372.90" width="1510" height="1" fill="#d6d6d6"/><rect x="26" y="394.90" width="1510" height="1" fill="#d6d6d6"/><rect x="26" y="416.90" width="1510" height="1" fill="#d6d6d6"/><rect x="26" y="438.90" width="1510" height="1" fill="#d6d6d6"/><rect x="26" y="460.90" width="1510" height="1" fill="#d6d6d6"/></svg>
<div class="a" style="left:279px;top:223.0px;width:24.4px;height:445px;background:#6a6a6a;"></div>
<div class="a" style="left:279px;top:223.3px;width:25px;height:20.6px;background:#262626;"></div>
<div class="a" style="left:279px;top:243.5px;width:24.4px;height:1.8px;background:#bdbdbd;"></div>
<div class="a" style="left:279px;top:265.5px;width:24.4px;height:1.8px;background:#bdbdbd;"></div>
<div class="a" style="left:279px;top:287.5px;width:24.4px;height:1.8px;background:#bdbdbd;"></div>
<div class="a" style="left:279px;top:309.5px;width:24.4px;height:1.8px;background:#bdbdbd;"></div>
<div class="a" style="left:279px;top:331.5px;width:24.4px;height:1.8px;background:#bdbdbd;"></div>
<div class="a" style="left:279px;top:353.5px;width:24.4px;height:1.8px;background:#bdbdbd;"></div>
<div class="a" style="left:279px;top:375.5px;width:24.4px;height:1.8px;background:#bdbdbd;"></div>
<div class="a" style="left:279px;top:397.5px;width:24.4px;height:1.8px;background:#bdbdbd;"></div>
<div class="a" style="left:279px;top:419.5px;width:24.4px;height:1.8px;background:#bdbdbd;"></div>
<div class="a" style="left:279px;top:441.5px;width:24.4px;height:1.8px;background:#bdbdbd;"></div>
<div class="a" style="left:279px;top:463.5px;width:24.4px;height:1.8px;background:#bdbdbd;"></div>
<div class="a" style="left:279px;top:485.5px;width:24.4px;height:1.8px;background:#bdbdbd;"></div>
<div class="a" style="left:279px;top:507.5px;width:24.4px;height:1.8px;background:#bdbdbd;"></div>
<div class="a" style="left:279px;top:529.5px;width:24.4px;height:1.8px;background:#bdbdbd;"></div>
<div class="a" style="left:279px;top:551.5px;width:24.4px;height:1.8px;background:#bdbdbd;"></div>
<div class="a" style="left:279px;top:573.5px;width:24.4px;height:1.8px;background:#bdbdbd;"></div>
<div class="a" style="left:279px;top:595.5px;width:24.4px;height:1.8px;background:#bdbdbd;"></div>
<div class="a" style="left:279px;top:617.5px;width:24.4px;height:1.8px;background:#bdbdbd;"></div>
<div class="a" style="left:279px;top:639.5px;width:24.4px;height:1.8px;background:#bdbdbd;"></div>
<div class="a" style="left:279px;top:661.5px;width:24.4px;height:1.8px;background:#bdbdbd;"></div>
<div class="a" style="left:279px;top:666.6px;width:25px;height:1.4px;background:#e8e8e8;"></div>
<div class="a t" style="left:335.73px;top:203.66px;height:18px;line-height:18px;font-size:13.5px;color:#fff;font-weight:700;">A</div>
<div class="a t" style="left:404.30px;top:203.66px;height:18px;line-height:18px;font-size:13.5px;color:#fff;-webkit-text-stroke:0.4px #fff;">B</div>
<div class="a t" style="left:472.13px;top:203.66px;height:18px;line-height:18px;font-size:13.5px;color:#fff;-webkit-text-stroke:0.4px #fff;">C</div>
<div class="a t" style="left:540.33px;top:203.66px;height:18px;line-height:18px;font-size:13.5px;color:#fff;-webkit-text-stroke:0.4px #fff;">D</div>
<div class="a t" style="left:608.90px;top:203.66px;height:18px;line-height:18px;font-size:13.5px;color:#fff;-webkit-text-stroke:0.4px #fff;">E</div>
<div class="a t" style="left:677.48px;top:203.66px;height:18px;line-height:18px;font-size:13.5px;color:#fff;-webkit-text-stroke:0.4px #fff;">F</div>
<div class="a t" style="left:744.55px;top:203.66px;height:18px;line-height:18px;font-size:13.5px;color:#fff;-webkit-text-stroke:0.4px #fff;">G</div>
<div class="a t" style="left:813.13px;top:203.66px;height:18px;line-height:18px;font-size:13.5px;color:#fff;-webkit-text-stroke:0.4px #fff;">H</div>
<div class="a t" style="left:884.32px;top:203.66px;height:18px;line-height:18px;font-size:13.5px;color:#fff;-webkit-text-stroke:0.4px #fff;">I</div>
<div class="a t" style="left:951.02px;top:203.66px;height:18px;line-height:18px;font-size:13.5px;color:#fff;-webkit-text-stroke:0.4px #fff;">J</div>
<div class="a t" style="left:1018.10px;top:203.66px;height:18px;line-height:18px;font-size:13.5px;color:#fff;-webkit-text-stroke:0.4px #fff;">K</div>
<div class="a t" style="left:1087.05px;top:203.66px;height:18px;line-height:18px;font-size:13.5px;color:#fff;-webkit-text-stroke:0.4px #fff;">L</div>
<div class="a t" style="left:1153.38px;top:203.66px;height:18px;line-height:18px;font-size:13.5px;color:#fff;-webkit-text-stroke:0.4px #fff;">M</div>
<div class="a t" style="left:1222.33px;top:203.66px;height:18px;line-height:18px;font-size:13.5px;color:#fff;-webkit-text-stroke:0.4px #fff;">N</div>
<div class="a t" style="left:1290.15px;top:203.66px;height:18px;line-height:18px;font-size:13.5px;color:#fff;-webkit-text-stroke:0.4px #fff;">O</div>
<div class="a t" style="left:1359.10px;top:203.66px;height:18px;line-height:18px;font-size:13.5px;color:#fff;-webkit-text-stroke:0.4px #fff;">P</div>
<div class="a t" style="left:1426.55px;top:203.66px;height:18px;line-height:18px;font-size:13.5px;color:#fff;-webkit-text-stroke:0.4px #fff;">Q</div>
<div class="a t" style="left:1495.13px;top:203.66px;height:18px;line-height:18px;font-size:13.5px;color:#fff;-webkit-text-stroke:0.4px #fff;">R</div>
<div class="a t" style="left:1563.70px;top:203.66px;height:18px;line-height:18px;font-size:13.5px;color:#fff;-webkit-text-stroke:0.4px #fff;">S</div>
<div class="a t" style="left:1632.28px;top:203.66px;height:18px;line-height:18px;font-size:13.5px;color:#fff;-webkit-text-stroke:0.4px #fff;">T</div>
<div class="a t" style="left:1699.73px;top:203.66px;height:18px;line-height:18px;font-size:13.5px;color:#fff;-webkit-text-stroke:0.4px #fff;">U</div>
<div class="a t" style="left:1768.30px;top:203.66px;height:18px;line-height:18px;font-size:13.5px;color:#fff;-webkit-text-stroke:0.4px #fff;">V</div>
<div class="a t" style="left:288.11px;top:223.96px;height:18px;line-height:18px;font-size:14px;color:#fff;font-weight:700;">1</div>
<div class="a t" style="left:288.11px;top:245.96px;height:18px;line-height:18px;font-size:14px;color:#fff;-webkit-text-stroke:0.35px #fff;">2</div>
<div class="a t" style="left:288.11px;top:267.96px;height:18px;line-height:18px;font-size:14px;color:#fff;-webkit-text-stroke:0.35px #fff;">3</div>
<div class="a t" style="left:288.11px;top:289.96px;height:18px;line-height:18px;font-size:14px;color:#fff;-webkit-text-stroke:0.35px #fff;">4</div>
<div class="a t" style="left:288.11px;top:311.96px;height:18px;line-height:18px;font-size:14px;color:#fff;-webkit-text-stroke:0.35px #fff;">5</div>
<div class="a t" style="left:288.11px;top:333.96px;height:18px;line-height:18px;font-size:14px;color:#fff;-webkit-text-stroke:0.35px #fff;">6</div>
<div class="a t" style="left:288.11px;top:355.96px;height:18px;line-height:18px;font-size:14px;color:#fff;-webkit-text-stroke:0.35px #fff;">7</div>
<div class="a t" style="left:288.11px;top:377.96px;height:18px;line-height:18px;font-size:14px;color:#fff;-webkit-text-stroke:0.35px #fff;">8</div>
<div class="a t" style="left:288.11px;top:399.96px;height:18px;line-height:18px;font-size:14px;color:#fff;-webkit-text-stroke:0.35px #fff;">9</div>
<div class="a t" style="left:284.21px;top:421.96px;height:18px;line-height:18px;font-size:14px;color:#fff;-webkit-text-stroke:0.35px #fff;">10</div>
<div class="a t" style="left:284.73px;top:443.96px;height:18px;line-height:18px;font-size:14px;color:#fff;-webkit-text-stroke:0.35px #fff;">11</div>
<div class="a t" style="left:284.21px;top:465.96px;height:18px;line-height:18px;font-size:14px;color:#fff;-webkit-text-stroke:0.35px #fff;">12</div>
<div class="a t" style="left:284.21px;top:487.96px;height:18px;line-height:18px;font-size:14px;color:#fff;-webkit-text-stroke:0.35px #fff;">13</div>
<div class="a t" style="left:284.21px;top:509.96px;height:18px;line-height:18px;font-size:14px;color:#fff;-webkit-text-stroke:0.35px #fff;">14</div>
<div class="a t" style="left:284.21px;top:531.96px;height:18px;line-height:18px;font-size:14px;color:#fff;-webkit-text-stroke:0.35px #fff;">15</div>
<div class="a t" style="left:284.21px;top:553.96px;height:18px;line-height:18px;font-size:14px;color:#fff;-webkit-text-stroke:0.35px #fff;">16</div>
<div class="a t" style="left:284.21px;top:575.96px;height:18px;line-height:18px;font-size:14px;color:#fff;-webkit-text-stroke:0.35px #fff;">17</div>
<div class="a t" style="left:284.21px;top:597.96px;height:18px;line-height:18px;font-size:14px;color:#fff;-webkit-text-stroke:0.35px #fff;">18</div>
<div class="a t" style="left:284.21px;top:619.96px;height:18px;line-height:18px;font-size:14px;color:#fff;-webkit-text-stroke:0.35px #fff;">19</div>
<div class="a t" style="left:284.21px;top:641.96px;height:18px;line-height:18px;font-size:14px;color:#fff;-webkit-text-stroke:0.35px #fff;">20</div>
<div class="a" style="left:306px;top:243.6px;width:68px;height:2.2px;background:#217346;"></div>
<div class="a" style="left:373.8px;top:223px;width:2px;height:19px;background:#217346;"></div>
<div class="a" style="left:371px;top:241.4px;width:6.2px;height:6.2px;background:#217346;border:1px solid #fff;box-sizing:content-box;margin:-1px;"></div>
<div class="a" style="left:280px;top:677px;width:1535px;height:16px;background:#595959;"></div>
<div class="a" style="left:280px;top:677px;width:15.5px;height:16px;background:#8c8c8c;border:1px solid #505050;"></div>
<svg class="a" style="left:285px;top:681px;" width="5" height="8" viewBox="0 0 5 8"><polygon points="5,0 5,8 0.5,4" fill="#6a6a6a"/></svg>
<div class="a" style="left:296.5px;top:677px;width:1268.5px;height:16px;background:#9a9a9a;border:1px solid #505050;"></div>
<div class="a" style="left:1798px;top:677px;width:15px;height:16px;background:#8c8c8c;border:1px solid #505050;"></div>
<svg class="a" style="left:1803.5px;top:681px;" width="5" height="8" viewBox="0 0 5 8"><polygon points="0,0 0,8 4.5,4" fill="#6a6a6a"/></svg>
<div class="a" style="left:1818.3px;top:201.5px;width:15.4px;height:467px;background:#595959;"></div>
<div class="a" style="left:1818.3px;top:201.5px;width:15.4px;height:15px;background:#8c8c8c;border:1px solid #505050;"></div>
<svg class="a" style="left:1822px;top:207px;" width="8" height="5" viewBox="0 0 8 5"><polygon points="0,5 8,5 4,0.5" fill="#6a6a6a"/></svg>
<div class="a" style="left:1818.3px;top:217.8px;width:15.4px;height:42.8px;background:#9a9a9a;border:1px solid #484848;"></div>
<div class="a" style="left:1818.3px;top:653px;width:15.4px;height:15px;background:#8c8c8c;border:1px solid #505050;"></div>
<svg class="a" style="left:1822px;top:658px;" width="8" height="5" viewBox="0 0 8 5"><polygon points="0,0 8,0 4,4.5" fill="#6a6a6a"/></svg>
<div class="a" style="left:0px;top:701px;width:1838px;height:43px;background:#262626;"></div>
<svg class="a" style="left:0px;top:700px;" width="1838" height="44" viewBox="0 0 1838 44"><path d="M-2,7 H108 Q110.5,7 110.5,9.5 V37.7 Q110.5,40.2 113,40.2 H244.3 Q246.8,40.2 246.8,37.7 V9.5 Q246.8,7 249.3,7 H1840" fill="none" stroke="#00bdb5" stroke-width="4"/></svg>
<div class="a" style="left:14px;top:721.2px;width:15.2px;height:2.4px;background:#d8d8d8;"></div>
<div class="a" style="left:14px;top:725.9000000000001px;width:15.2px;height:2.4px;background:#d8d8d8;"></div>
<div class="a" style="left:14px;top:730.6px;width:15.2px;height:2.4px;background:#d8d8d8;"></div>
<svg class="a" style="left:50px;top:717px;" width="21" height="20" viewBox="0 0 21 20"><path d="M1,1.4 h6.6 l1.6,2 h8.6 v3 h-7 a6,6 0 0 0 -4.6,9.6 h-5.2 z" fill="#c8c8c8"/><circle cx="13" cy="12.4" r="5.2" fill="none" stroke="#d8d8d8" stroke-width="1.3"/><path d="M9.4,16.4 L6.6,19.2" stroke="#d8d8d8" stroke-width="1.3"/></svg>
<svg class="a" style="left:84px;top:718px;" width="19" height="18" viewBox="0 0 19 18"><path d="M0.6,1 h9.4 v2 l-3.4,3.4 v4 h-2.6 v-4 l-3.4,-3.4 z" fill="#d8d8d8"/><path d="M13,1.4 h4.8 v10.4 M0.6,8 v8.4 h5 v-3.4" fill="none" stroke="#d8d8d8" stroke-width="1.2"/><rect x="5.6" y="12.4" width="12.4" height="1.6" fill="#8c8c8c"/><rect x="8.6" y="15" width="3.6" height="1.8" fill="#d8d8d8"/><rect x="13.6" y="15" width="4.4" height="1.8" fill="#d8d8d8"/></svg>
<svg class="a" style="left:129.8px;top:717.2px;" width="12" height="12" viewBox="0 0 12 12"><path d="M0,0 L0,12 L12,12 Z M2.1,5 L2.1,10 L7.1,10 Z" fill="#10b9b0" fill-rule="evenodd"/><path d="M4,0.8 H11.8 V2 H5.2 Z M6.2,2.9 H11.8 V4.1 H7.4 Z M8.4,5 H11.8 V6.2 H9.6 Z M10.4,7.1 H11.8 V8.4 H11.6 Z" fill="#10b9b0"/></svg>
<div class="a t" style="left:147.50px;top:715.65px;height:17px;line-height:17px;font-size:13px;color:#fff;font-weight:700;letter-spacing:0.126px;">Tabulation1</div>
<svg class="a" style="left:229px;top:720px;" width="11" height="7" viewBox="0 0 11 7"><polygon points="0,0 11,0 5.5,7" fill="#fff"/></svg>
<svg class="a" style="left:263px;top:720px;" width="14" height="14" viewBox="0 0 14 14"><path d="M7,0 v14 M0,7 h14" stroke="#e6e6e6" stroke-width="1.7"/></svg>
<svg class="a" style="left:1765px;top:717px;" width="20" height="20" viewBox="0 0 20 20"><g transform="rotate(-38 10 10)"><ellipse cx="10" cy="1.8" rx="4.4" ry="1.7" fill="#d0d0d0"/><path d="M6.8,3.4 h6.4 l0.6,5.4 h-7.6 z" fill="#d0d0d0"/><path d="M4.4,10.4 q5.6,2.2 11.2,0" fill="none" stroke="#d0d0d0" stroke-width="1.5"/><polygon points="8.2,12.2 11.8,12.2 10,21" fill="#d0d0d0"/></g></svg>
<svg class="a" style="left:1793px;top:722.8px;" width="7.4" height="6.4" viewBox="0 0 7.4 6.4"><polygon points="0,0 7.4,0 3.7,6.4" fill="#e8e8e8"/></svg>
<svg class="a" style="left:1811.5px;top:718.5px;" width="18" height="20" viewBox="0 0 18 20"><polyline points="7.68,9.71 7.68,9.60 7.70,9.49 7.72,9.38 7.76,9.27 7.80,9.17 7.86,9.06 7.93,8.96 8.01,8.86 8.10,8.77 8.20,8.69 8.31,8.62 8.43,8.55 8.56,8.50 8.70,8.47 8.84,8.44 8.98,8.43 9.13,8.44 9.29,8.47 9.44,8.51 9.59,8.56 9.74,8.64 9.89,8.73 10.03,8.84 10.17,8.97 10.29,9.11 10.41,9.27 10.51,9.45 10.61,9.63 10.69,9.83 10.75,10.04 10.80,10.27 10.83,10.49 10.84,10.73 10.83,10.97 10.81,11.21 10.76,11.46 10.69,11.70 10.61,11.94 10.50,12.17 10.37,12.39 10.23,12.60 10.06,12.80 9.88,12.99 9.68,13.16 9.46,13.31 9.23,13.44 8.99,13.55 8.73,13.63 8.47,13.69 8.20,13.73 7.92,13.73 7.64,13.71 7.36,13.66 7.08,13.58 6.81,13.48 6.54,13.34 6.28,13.18 6.03,12.98 5.79,12.76 5.57,12.52 5.36,12.25 5.18,11.96 5.01,11.64 4.87,11.31 4.76,10.96 4.67,10.60 4.61,10.23 4.58,9.84 4.58,9.45 4.61,9.06 4.67,8.67 4.76,8.28 4.88,7.90 5.03,7.53 5.21,7.17 5.43,6.83 5.67,6.50 5.93,6.20 6.23,5.92 6.54,5.67 6.88,5.45 7.24,5.26 7.61,5.11 8.00,4.99 8.40,4.91 8.81,4.87 9.22,4.87 9.63,4.91 10.05,5.00 10.46,5.12 10.86,5.29 11.25,5.49 11.63,5.74 11.99,6.02 12.32,6.35 12.64,6.70 12.93,7.09 13.19,7.51 13.42,7.96 13.61,8.43 13.77,8.93 13.89,9.44 13.98,9.97 14.02,10.50 14.02,11.05 13.98,11.59 13.89,12.14 13.76,12.67 13.59,13.20 13.38,13.71 13.13,14.20 12.84,14.67 12.51,15.12 12.15,15.53 11.75,15.91 11.32,16.25 10.87,16.55 10.39,16.80 9.89,17.01 9.37,17.17 8.83,17.27 8.29,17.33 7.74,17.33 7.19,17.28 6.64,17.18 6.10,17.01 5.57,16.80 5.05,16.53 4.55,16.21 4.08,15.84 3.63,15.43 3.22,14.96 2.84,14.46 2.49,13.91 2.19,13.33 1.93,12.72 1.72,12.09 1.56,11.43 1.45,10.75 1.39,10.06 1.38,9.36 1.43,8.66 1.53,7.97 1.68,7.28 1.89,6.60 2.15,5.95 2.47,5.31 2.83,4.71 3.24,4.15 3.69,3.62 4.19,3.13 4.72,2.70 5.29,2.31 5.89,1.98 6.52,1.71 7.17,1.50 7.83,1.35 8.51,1.27 9.20,1.25 9.89,1.31" fill="none" stroke="#d0d0d0" stroke-width="1.9" stroke-linecap="round"/></svg>
<svg class="a" style="left:662px;top:0px;" width="1" height="1" viewBox="0 0 1 1"><path d="M0.0,15.5 H16.0" stroke="#c6c6c6" stroke-width="1.3"/><path d="M9.8,19.8 H16.0" stroke="#c6c6c6" stroke-width="1.3"/><path d="M9.8,24.2 H16.0" stroke="#c6c6c6" stroke-width="1.3"/><path d="M0.0,28.4 H16.0" stroke="#c6c6c6" stroke-width="1.3"/></svg>
<svg class="a" style="left:662px;top:17.5px;" width="8" height="9" viewBox="0 0 8 9"><path d="M7.4,4.4 H1 M4.2,0.8 L0.8,4.4 L4.2,8" fill="none" stroke="#16a8e8" stroke-width="1.5"/></svg>
<svg class="a" style="left:692px;top:0px;" width="1" height="1" viewBox="0 0 1 1"><path d="M0.0,15.5 H15.4" stroke="#c6c6c6" stroke-width="1.3"/><path d="M9.0,19.8 H15.4" stroke="#c6c6c6" stroke-width="1.3"/><path d="M9.0,24.2 H15.4" stroke="#c6c6c6" stroke-width="1.3"/><path d="M0.0,28.4 H15.4" stroke="#c6c6c6" stroke-width="1.3"/></svg>
<svg class="a" style="left:691.5px;top:17.5px;" width="8" height="9" viewBox="0 0 8 9"><path d="M0.2,4.4 H6.6 M3.6,0.8 L7,4.4 L3.6,8" fill="none" stroke="#16a8e8" stroke-width="1.5"/></svg>
<svg class="a" style="left:735px;top:7px;" width="30" height="28" viewBox="0 0 30 28"><polygon points="18.4,1.4 27,9.2 10.6,25.8 1.3,17" fill="none" stroke="#4a9cc8" stroke-width="1.2"/><polygon points="6.4,12.4 15,20.4 10.6,24.6 2.6,17" fill="#f07050"/><path d="M7.4,11 L16.4,19.6" stroke="#4a9cc8" stroke-width="1"/></svg>
<svg class="a" style="left:523px;top:49px;" width="17" height="17" viewBox="0 0 17 17"><rect x="0.8" y="0.8" width="15.4" height="15.4" fill="none" stroke="#e6e6e6" stroke-width="1.5"/><path d="M8.5,0.8 V16.2 M0.8,8.5 H16.2" stroke="#e6e6e6" stroke-width="1.4"/></svg>
<svg class="a" style="left:577px;top:44px;" width="19" height="23" viewBox="0 0 19 23"><path d="M12.6,1.4 H1.8 V16.4 H4" fill="none" stroke="#9a9a9a" stroke-width="1"/><path d="M5.2,16.4 L6.2,12.6 L15.2,3.2 L17.6,5.4 L8.6,15 Z M13.6,4.8 L16,7" fill="none" stroke="#4a9cd0" stroke-width="1.2" stroke-linejoin="round"/><rect x="0" y="18.2" width="18" height="3.8" fill="#000"/></svg>
<svg class="a" style="left:622px;top:45px;" width="20" height="22" viewBox="0 0 20 22"><path d="M5,3.6 V1 H9 L17,9.6 L9.6,15.4 L3.6,8.6 Z" fill="none" stroke="#9a9a9a" stroke-width="1.1" stroke-linejoin="round"/><path d="M4.4,8.4 H15.6 L9.6,14.8 Z" fill="#8a8a8a"/><path d="M16.8,10.6 l1.7,2.6 l-1.7,2 l-1.7,-2 z" fill="#4a9cd0"/><rect x="0.9" y="17" width="18.3" height="4" fill="#fff"/></svg>
<div class="a t" style="left:671.13px;top:44.00px;height:22px;line-height:22px;font-size:17px;color:#9a9a9a;font-weight:400;transform:scaleX(0.92);">A</div>
<div class="a" style="left:667px;top:62.2px;width:18px;height:3.8px;background:#0a1430;"></div>
<svg class="a" style="left:795px;top:0px;" width="1" height="1" viewBox="0 0 1 1"><path d="M1.0,14.4 H17.0" stroke="#c6c6c6" stroke-width="1.3"/><path d="M4.0,18.7 H14.5" stroke="#c6c6c6" stroke-width="1.3"/><path d="M1.0,23.2 H17.0" stroke="#c6c6c6" stroke-width="1.3"/></svg>
<svg class="a" style="left:825px;top:0px;" width="1" height="1" viewBox="0 0 1 1"><path d="M0.8,17.3 H15.8" stroke="#dcdcdc" stroke-width="1.3"/><path d="M3.4,21.9 H13.2" stroke="#dcdcdc" stroke-width="1.3"/><path d="M0.8,26.4 H15.8" stroke="#dcdcdc" stroke-width="1.3"/></svg>
<svg class="a" style="left:855px;top:0px;" width="1" height="1" viewBox="0 0 1 1"><path d="M1.0,21.6 H16.0" stroke="#c6c6c6" stroke-width="1.3"/><path d="M4.0,26.2 H13.0" stroke="#c6c6c6" stroke-width="1.3"/><path d="M1.0,30.7 H16.0" stroke="#c6c6c6" stroke-width="1.3"/></svg>
<svg class="a" style="left:795px;top:0px;" width="1" height="1" viewBox="0 0 1 1"><path d="M0.2,51.2 H15.8" stroke="#c6c6c6" stroke-width="1.3"/><path d="M0.2,55.6 H11.3" stroke="#c6c6c6" stroke-width="1.3"/><path d="M0.2,60.0 H15.8" stroke="#c6c6c6" stroke-width="1.3"/><path d="M0.2,64.4 H11.3" stroke="#c6c6c6" stroke-width="1.3"/></svg>
<svg class="a" style="left:825px;top:0px;" width="1" height="1" viewBox="0 0 1 1"><path d="M0.8,51.2 H15.8" stroke="#c6c6c6" stroke-width="1.3"/><path d="M3.4,55.6 H13.2" stroke="#c6c6c6" stroke-width="1.3"/><path d="M0.8,60.0 H15.8" stroke="#c6c6c6" stroke-width="1.3"/><path d="M3.4,64.4 H13.2" stroke="#c6c6c6" stroke-width="1.3"/></svg>
<svg class="a" style="left:856px;top:0px;" width="1" height="1" viewBox="0 0 1 1"><path d="M1.0,51.2 H16.0" stroke="#c6c6c6" stroke-width="1.3"/><path d="M5.7,55.6 H16.0" stroke="#c6c6c6" stroke-width="1.3"/><path d="M1.0,60.0 H16.0" stroke="#c6c6c6" stroke-width="1.3"/><path d="M5.7,64.4 H16.0" stroke="#c6c6c6" stroke-width="1.3"/></svg>
<div class="a t" style="left:892.80px;top:12.31px;height:12px;line-height:12px;font-size:9.5px;color:#cfcfcf;letter-spacing:0.956px;">ab</div>
<div class="a t" style="left:893.00px;top:20.91px;height:12px;line-height:12px;font-size:9.5px;color:#cfcfcf;">c</div>
<svg class="a" style="left:899px;top:18px;" width="12" height="10" viewBox="0 0 12 10"><path d="M10.8,0.6 V7 H2 M5,4 L1.6,7 L5,10" fill="none" stroke="#4aa0d8" stroke-width="1.3"/></svg>
<svg class="a" style="left:892px;top:49px;" width="19" height="17" viewBox="0 0 19 17"><rect x="0.6" y="0.6" width="17.4" height="15.8" fill="none" stroke="#9a9a9a" stroke-width="1.1"/><path d="M6.4,0.6 v2.2 M12.2,0.6 v2.2 M6.4,14.2 v2.2 M12.2,14.2 v2.2" stroke="#9a9a9a" stroke-width="1"/><rect x="0.6" y="3.4" width="17.4" height="10.2" fill="#474747" stroke="#4aa0d8" stroke-width="1.2"/><path d="M3.4,8.5 H15.2 M6,6 L3.2,8.5 L6,11 M12.6,6 L15.4,8.5 L12.6,11" fill="none" stroke="#4aa0d8" stroke-width="1.1"/></svg>
<svg class="a" style="left:1152px;top:51px;" width="12" height="8" viewBox="0 0 12 8"><path d="M11.4,3.8 H1 M4,0.8 L0.8,3.8 L4,6.8" fill="none" stroke="#16a8e8" stroke-width="1.3"/></svg>
<div class="a t" style="left:1163.50px;top:47.21px;height:12px;line-height:12px;font-size:9.5px;color:#c6c6c6;letter-spacing:-0.615px;">.0</div>
<div class="a t" style="left:1157.30px;top:56.81px;height:12px;line-height:12px;font-size:9.5px;color:#c6c6c6;">.00</div>
<div class="a t" style="left:1186.60px;top:47.21px;height:12px;line-height:12px;font-size:9.5px;color:#c6c6c6;letter-spacing:-0.202px;">.00</div>
<svg class="a" style="left:1182.5px;top:58.6px;" width="12" height="8" viewBox="0 0 12 8"><path d="M0.4,3.8 H10.4 M7.4,0.8 L10.6,3.8 L7.4,6.8" fill="none" stroke="#16a8e8" stroke-width="1.3"/></svg>
<div class="a t" style="left:1192.30px;top:56.81px;height:12px;line-height:12px;font-size:9.5px;color:#c6c6c6;letter-spacing:-0.615px;">.0</div>
<svg class="a" style="left:1247px;top:2.6px;" width="35" height="33" viewBox="0 0 35 33"><g fill="none" stroke="#8c8c8c" stroke-width="0.9"><rect x="0.5" y="0.5" width="34.2" height="31.6"/><path d="M6.4,0.5 V32 M28.4,0.5 V32 M0.5,5.4 H34.6 M0.5,11.6 H34.6 M0.5,17.8 H34.6 M0.5,24.6 H34.6"/></g><rect x="6.8" y="6" width="15" height="5.2" fill="#c96a5a" stroke="#a8584a" stroke-width="0.6"/><rect x="6.8" y="12.4" width="8.6" height="5.2" fill="#5aa4d0" stroke="#4a88b0" stroke-width="0.6"/><rect x="6.8" y="19" width="17" height="5.4" fill="#f0b46e" stroke="#d09850" stroke-width="0.6"/><rect x="6.8" y="25.6" width="15" height="4.8" fill="#c478f8" stroke="#a862d8" stroke-width="0.6"/></svg>
<svg class="a" style="left:1324px;top:2.6px;" width="32" height="31" viewBox="0 0 32 31"><g fill="none" stroke="#a4a4a4" stroke-width="1"><rect x="0.5" y="0.5" width="30.4" height="29.4"/><path d="M0.5,12.4 H31 M0.5,21.6 H31 M10.5,12.4 V30 M20.8,12.4 V30"/></g><rect x="2.4" y="6.4" width="26.6" height="4.8" fill="#35607e" stroke="#4a88b0" stroke-width="0.9"/></svg>
<svg class="a" style="left:1406px;top:3px;" width="24" height="32" viewBox="0 0 24 32"><path d="M22,5.6 V1 H1.6 L13.6,15.6 L1.6,31 H22 V26.4" fill="none" stroke="#cacaca" stroke-width="1.1" stroke-linejoin="miter"/></svg>
<svg class="a" style="left:1469px;top:4.6px;" width="32" height="32" viewBox="0 0 32 32"><path d="M0.4,0 H31.2 V3 L18.6,15.6 V32 H13 V15.6 L0.4,3 Z" fill="#8a8a8a"/><path d="M5.4,5 L14.2,14" stroke="#6a6a6a" stroke-width="1"/></svg>
<svg class="a" style="left:1540px;top:3.4px;" width="34" height="38" viewBox="0 0 34 38"><g fill="#808080"><rect x="0.20" y="1.60" width="3" height="2.1"/><rect x="0.20" y="4.90" width="3" height="2.1"/><rect x="0.20" y="8.20" width="3" height="2.1"/><rect x="0.20" y="11.50" width="3" height="2.1"/><rect x="0.20" y="14.80" width="3" height="2.1"/><rect x="0.20" y="18.10" width="3" height="2.1"/><rect x="0.20" y="21.40" width="3" height="2.1"/><rect x="4.60" y="1.60" width="3" height="2.1"/><rect x="4.60" y="4.90" width="3" height="2.1"/><rect x="4.60" y="8.20" width="3" height="2.1"/><rect x="4.60" y="11.50" width="3" height="2.1"/><rect x="4.60" y="14.80" width="3" height="2.1"/><rect x="4.60" y="18.10" width="3" height="2.1"/><rect x="4.60" y="21.40" width="3" height="2.1"/><rect x="9.00" y="1.60" width="3" height="2.1"/><rect x="9.00" y="4.90" width="3" height="2.1"/><rect x="9.00" y="8.20" width="3" height="2.1"/><rect x="9.00" y="11.50" width="3" height="2.1"/><rect x="9.00" y="14.80" width="3" height="2.1"/><rect x="13.40" y="1.60" width="3" height="2.1"/><rect x="13.40" y="4.90" width="3" height="2.1"/><rect x="13.40" y="8.20" width="3" height="2.1"/><rect x="13.40" y="11.50" width="3" height="2.1"/><rect x="13.40" y="14.80" width="3" height="2.1"/><rect x="17.80" y="1.60" width="3" height="2.1"/><rect x="17.80" y="4.90" width="3" height="2.1"/><rect x="17.80" y="8.20" width="3" height="2.1"/><rect x="17.80" y="11.50" width="3" height="2.1"/></g><rect x="10.2" y="15" width="13" height="14" fill="#474747"/><path d="M24.4,18.2 V14.3 H9.4 V29.6 H14.2" fill="none" stroke="#16a8e8" stroke-width="1.8"/><circle cx="23.6" cy="27.75" r="8.8" fill="#474747"/><path d="M23.2,21.35 A6.4,6.4 0 0 0 23.2,34.15" fill="none" stroke="#e2765c" stroke-width="4.4"/><path d="M24.1,21.35 A6.4,6.4 0 0 1 29.98,28.1" fill="none" stroke="#8c8c8c" stroke-width="4.4"/><path d="M29.96,28.7 A6.4,6.4 0 0 1 24.1,34.15" fill="none" stroke="#f2b866" stroke-width="4.4"/><path d="M27.6,14 h3.6 v2" fill="none" stroke="#bcbcbc" stroke-width="1"/><polygon points="29.6,15.6 32.8,15.6 31.2,18" fill="#bcbcbc"/></svg>
<svg class="a" style="left:1610px;top:9.6px;" width="32" height="26" viewBox="0 0 32 26"><g fill="none" stroke="#a0a0a0" stroke-width="0.9"><rect x="0.5" y="0.5" width="30.2" height="24.4"/><path d="M9.6,0.5 V25"/><path d="M21.4,0.5 V25"/><path d="M0.5,6.4 H30.6 M0.5,18.6 H30.6"/></g><rect x="6" y="8" width="26" height="9.2" fill="#4c6272" stroke="#4aa8e0" stroke-width="1"/><path d="M14.6,8 V17.2 M23,8 V17.2" stroke="#4aa8e0" stroke-width="0.8"/><rect x="-1" y="9" width="7" height="7.4" fill="#474747"/><path d="M10,12.6 H-1.4 M3,6 L-1.8,12.6 L3,19.2" fill="none" stroke="#4aa8e0" stroke-width="1.2"/></svg>
<svg class="a" style="left:1671px;top:9.6px;" width="34" height="26" viewBox="0 0 34 26"><g fill="none" stroke="#a0a0a0" stroke-width="0.9"><rect x="0.5" y="0.5" width="30.2" height="24.4"/><path d="M9.6,0.5 V25"/><path d="M21.4,0.5 V25"/><path d="M0.5,6.4 H30.6 M0.5,18.6 H30.6"/></g><path d="M4.4,8 H19 L22,12.6 L19,17.2 H4.4 Z" fill="#4c6272" stroke="#4aa8e0" stroke-width="1"/><path d="M13,8 V17.2" stroke="#4aa8e0" stroke-width="0.8"/><rect x="21.6" y="6" width="10" height="13" fill="#474747"/><path d="M22,6.8 L32.6,18.4 M32.6,6.8 L22,18.4" stroke="#f07050" stroke-width="1.3"/></svg>
<svg class="a" style="left:1734.4px;top:9.6px;" width="32" height="26" viewBox="0 0 32 26"><g fill="none" stroke="#a0a0a0" stroke-width="0.9"><rect x="0.5" y="0.5" width="30.2" height="24.4"/><path d="M7.6,0.5 V25"/><path d="M22.8,0.5 V25"/><path d="M0.5,6.4 H30.6 M0.5,18.6 H30.6"/></g><rect x="8" y="8" width="15.2" height="9.2" fill="#4c6272" stroke="#4aa8e0" stroke-width="1"/></svg>
<div class="a" style="left:98px;top:4px;width:110.30000000000001px;height:98px;border:6px solid #fb4545;box-shadow:2px 4px 6px rgba(0,0,0,.55), inset 1.5px 4px 5px -1px rgba(0,0,0,.55);"></div>
<div class="a" style="left:208px;top:2px;width:1596.8px;height:102.8px;border:6px solid #1e9e2e;box-shadow:2px 4px 6px rgba(0,0,0,.55), inset 1.5px 4px 5px -1px rgba(0,0,0,.55);"></div>
<div class="a" style="left:4px;top:170.5px;width:223.4px;height:152.5px;border:6px solid #4459fb;box-shadow:2px 4px 6px rgba(0,0,0,.55), inset 1.5px 4px 5px -1px rgba(0,0,0,.55);"></div>
<div class="a" style="left:229px;top:136px;width:51px;height:318px;border:6px solid #e6f80a;box-shadow:2px 4px 6px rgba(0,0,0,.55), inset 1.5px 4px 5px -1px rgba(0,0,0,.55);"></div>
<div class="a" style="left:303.2px;top:223.7px;width:1512.0px;height:443.90000000000003px;border:6px solid #f8a90c;box-shadow:2px 4px 6px rgba(0,0,0,.55), inset 1.5px 4px 5px -1px rgba(0,0,0,.55);"></div>
<div class="a" style="left:237px;top:104px;width:1593px;height:101px;border:3.2px solid #d010d0;box-shadow:2px 4px 6px rgba(0,0,0,.55), inset 1.5px 4px 5px -1px rgba(0,0,0,.55);"></div>
</div>
<div class="a" style="left:1838px;top:33px;width:3px;height:3px;background:#7a7a7a;"></div>
<div class="a" style="left:1838px;top:74px;width:3px;height:1px;background:#bdbdbd;"></div>
<div class="a" style="left:1838px;top:108px;width:3px;height:1px;background:#bdbdbd;"></div>
<div class="a" style="left:1838px;top:91px;width:2px;height:6px;background:#8a8fb0;"></div>
<div class="a" style="left:1838px;top:121px;width:2px;height:6px;background:#7a84b8;"></div>
</body></html>
